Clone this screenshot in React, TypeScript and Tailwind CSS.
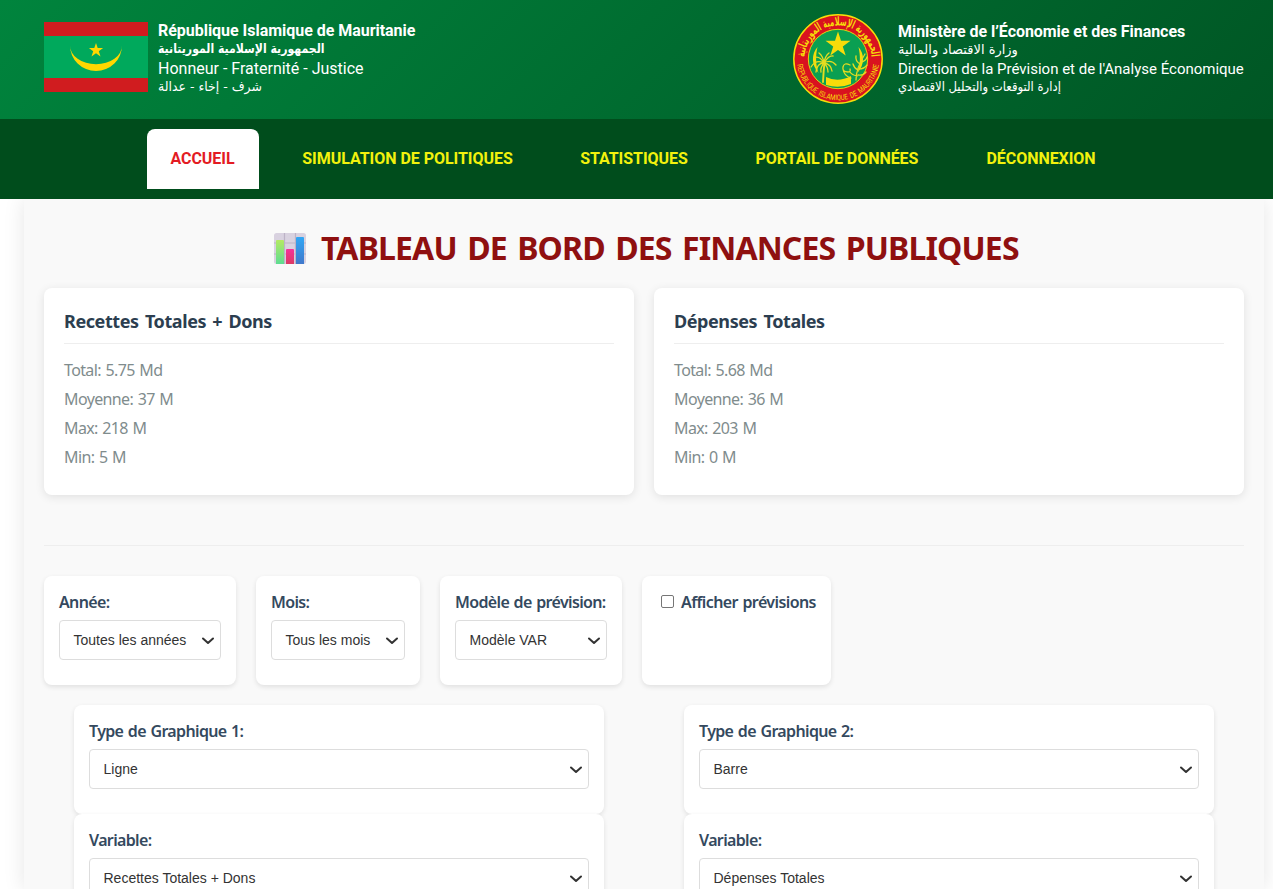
import React from "react";

const NAV = [
  { label: "ACCUEIL", width: "w-[112px]", active: true },
  { label: "SIMULATION DE POLITIQUES", width: "w-[258px]" },
  { label: "STATISTIQUES", width: "w-[155px]" },
  { label: "PORTAIL DE DONNÉES", width: "w-[211px]" },
  { label: "DÉCONNEXION", width: "w-[157px]" },
];

function Flag() {
  return (
    <svg className="h-[70px] w-[104px] shrink-0" viewBox="0 0 104 70">
      <rect width="104" height="70" fill="#d01c1f" />
      <rect y="14" width="104" height="42" fill="#00a95c" />
      <path d="M26 23.500a26 25.500 0 0 0 52 0a26 18.800 0 0 1-52 0z" fill="#ffd700" />
      <path d="M52 21l1.700 5h5.400l-4.300 3.200 1.700 5.200-4.500-3.200-4.500 3.200 1.700-5.200-4.300-3.200h5.400z" fill="#ffd700" />
    </svg>
  );
}

function Emblem() {
  return (
    <svg className="h-[90px] w-[90px] shrink-0" viewBox="0 0 90 90">
      <defs>
        <path id="arcTop" d="M11.500 42.500a33.600 33.600 0 0 1 67 0" />
        <path id="arcBottom" d="M3.800 45a41.200 41.200 0 0 0 82.400 0" />
      </defs>
      <circle cx="45" cy="45" r="44.2" fill="#d9121f" stroke="#f7dc0a" strokeWidth="1.5" />
      <circle cx="45" cy="45" r="29.7" fill="#0a9f52" stroke="#f7dc0a" strokeWidth="0.9" />
      <text fill="#f7dc0a" fontSize="12" fontFamily="DejaVu Sans" fontWeight="bold" textAnchor="middle" direction="rtl" textLength="101" lengthAdjust="spacingAndGlyphs">
        <textPath href="#arcTop" startOffset="50%">الجمهورية الإسلامية الموريتانية</textPath>
      </text>
      <text fill="#f7dc0a" fontSize="7.800" fontFamily="Roboto" textLength="118" lengthAdjust="spacingAndGlyphs" wordSpacing="1.500">
        <textPath href="#arcBottom" startOffset="5.500" textLength="118" lengthAdjust="spacingAndGlyphs">REPUBLIQUE ISLAMIQUE DE MAURITANIE</textPath>
      </text>
      <path d="M24.500 33c-6 7-6.500 17 1 26c-3-9-3-17-1-26zM65.500 33c6 7 6.500 17-1 26c3-9 3-17 1-26z" fill="#f7dc0a" />
      <path d="M45 17.500l3 9.200h9.500l-7.700 5.700 2.900 9.100-7.700-5.600-7.700 5.600 2.900-9.100-7.700-5.700h9.500z" fill="#f7dc0a" />
      <path d="M33 63q12 6 25-1v8q-12 5-25 1z" fill="#f7dc0a" />
      <g fill="none" stroke="#e5dc20" strokeWidth="1.300" strokeLinecap="round">
        <path d="M31.500 48q-1 10-1.500 20" strokeWidth="1.900" />
        <path d="M31 49q-5-8-10-5M31 49q-8-4-13 4M31 49q-7 0-8 9M31 49q5-8 9-7M31 49q7-4 12 2M31 49q7 1 8 8M31 49q-1-7-5-10M31 49q1-7 5-10M31 49q-4 5-3 9M31 49q4 4 4 9" />
        <path d="M57 51q-6-3-7 2t5 5q3 0 2-3M50 55q1 7 8 9M63 66q0-12 9-26M65 56q-4-2-5-6M67 50q-5-3-4-8M66 55q5 0 8-4M68 48q5-1 6-5M65 61q5 1 8-3M64 62q-5-1-7-4" />
      </g>
    </svg>
  );
}

function ChartIcon() {
  return (
    <svg className="h-[31px] w-8 shrink-0" viewBox="0 0 32 31">
      <defs>
        <linearGradient id="green" x1="0" y1="0" x2="0" y2="1"><stop stopColor="#b4ea63" /><stop offset="1" stopColor="#5edc92" /></linearGradient>
        <linearGradient id="pink" x1="0" y1="0" x2="0" y2="1"><stop stopColor="#f7309b" /><stop offset="1" stopColor="#db3a63" /></linearGradient>
        <linearGradient id="blue" x1="0" y1="0" x2="0" y2="1"><stop stopColor="#32a7f5" /><stop offset="1" stopColor="#4078cb" /></linearGradient>
      </defs>
      <rect width="32" height="31" rx="2.500" fill="#d9d2e0" />
      <path d="M10.500 0v31M21.500 0v31M0 10h32M0 21h32" stroke="#bdb3c6" strokeWidth="1.200" />
      <path d="M2 31V8a1 1 0 0 1 1-1h6a1 1 0 0 1 1 1v23z" fill="url(#green)" />
      <path d="M12 31V17a1 1 0 0 1 1-1h6a1 1 0 0 1 1 1v14z" fill="url(#pink)" />
      <path d="M22 31V5a1 1 0 0 1 1-1h6a1 1 0 0 1 1 1v26z" fill="url(#blue)" />
    </svg>
  );
}

function StatCard({ title, lines }: { title: string; lines: string[] }) {
  return (
    <section className="h-[207px] flex-1 rounded-lg bg-white px-5 pt-5 shadow-[0_2px_10px_rgba(0,0,0,0.1)]">
      <h3 className="h-9 border-b border-[#eee] text-[18px] leading-[27px] font-bold tracking-[-0.42px] text-[#2c3e50] [word-spacing:2px]">{title}</h3>
      <div className="pt-3">
        {lines.map((line) => (
          <p key={line} className="h-[29px] text-[16px] leading-[29px] tracking-[-0.62px] text-[#7f8c8d] [word-spacing:1px]">{line}</p>
        ))}
      </div>
    </section>
  );
}

function Field({ label, value, width }: { label: string; value: string; width: string }) {
  return (
    <div className={`h-[109px] shrink-0 rounded-lg bg-white p-[15px] shadow-[0_2px_5px_rgba(0,0,0,0.1)] ${width}`}>
      <div className="h-[29px] text-[16px] leading-[22px] font-semibold tracking-[-0.65px] whitespace-nowrap text-[#34495e] [word-spacing:1px]">{label}</div>
      <div className="flex h-10 items-center justify-between rounded border border-[#ddd] bg-white pr-[5px] pl-[13.500px] font-['Liberation_Sans',sans-serif] text-[14px] text-[#333]">
        <span className="whitespace-nowrap">{value}</span>
        <svg className="mt-px h-[9px] w-[14px]" viewBox="0 0 14 9" fill="none" stroke="#333" strokeWidth="2" strokeLinecap="round" strokeLinejoin="round">
          <path d="M2 2.500l5 4.500 5-4.500" />
        </svg>
      </div>
    </div>
  );
}

export default function App() {
  return (
    <div className="h-[889px] overflow-hidden bg-white font-['Noto_Sans',sans-serif]">
      <header className="flex h-[119px] justify-between bg-[linear-gradient(135deg,#00843d,#005624)] pr-[29px] pl-11 font-['Roboto',sans-serif] text-[16px] text-white">
        <div className="flex pt-[22px]">
          <Flag />
          <div className="flex flex-col pl-[10px] whitespace-nowrap">
            <strong className="h-[18px] leading-[18px] font-bold tracking-[-0.03px]">République Islamique de Mauritanie</strong>
            <strong className="h-[19px] w-[198px] origin-left scale-x-[0.84] font-['DejaVu_Sans'] text-[13px] leading-[17px]">الجمهورية الإسلامية الموريتانية</strong>
            <span className="h-[19px] leading-[19px]">Honneur - Fraternité - Justice</span>
            <span className="h-[19px] w-[108px] origin-left scale-x-[0.96] font-['DejaVu_Sans'] text-[13px] leading-[17px]">شرف - إخاء - عدالة</span>
          </div>
        </div>
        <div className="flex pt-[14px]">
          <Emblem />
          <div className="flex w-[361px] flex-col pt-[9px] pl-[15px] whitespace-nowrap">
            <strong className="h-[18px] leading-[18px] font-bold tracking-[-0.05px]">Ministère de l’Économie et des Finances</strong>
            <span className="h-[19px] w-[120px] font-['DejaVu_Sans'] text-[13px] leading-[17px]">وزارة الاقتصاد والمالية</span>
            <span className="h-[18px] text-[15px] leading-[18px]">Direction de la Prévision et de l'Analyse Économique</span>
            <span className="h-[19px] w-[182px] origin-left scale-x-[0.895] font-['DejaVu_Sans'] text-[13px] leading-[17px]">إدارة التوقعات والتحليل الاقتصادي</span>
          </div>
        </div>
      </header>
      <nav className="flex h-20 gap-5 bg-[#004d1c] pt-[10px] pl-[147px] font-['Roboto',sans-serif] text-[16px] font-bold tracking-[-0.04px]">
        {NAV.map((item) => (
          <a
            key={item.label}
            className={`flex h-[60px] items-center justify-center pr-px whitespace-nowrap ${item.width} ${item.active ? "rounded-t-lg bg-white text-[#e31b23]" : "text-[#f2f20d]"}`}
          >
            {item.label}
          </a>
        ))}
      </nav>
      <main className="mr-[9px] ml-6 h-[691px] bg-[#f9f9f9] px-5 pt-[25px] shadow-[0_0_20px_rgba(0,0,0,0.1)] [clip-path:inset(0_-30px_0_-30px)]">
        <h1 className="flex h-[49px] items-center pl-[230px] text-[32px] font-bold whitespace-nowrap text-[#8f1010]">
          <ChartIcon />
          <span className="pb-[2px] pl-[15px] tracking-[-0.87px] [word-spacing:3px]">TABLEAU DE BORD DES FINANCES PUBLIQUES</span>
        </h1>
        <div className="mt-[15px] flex gap-5">
          <StatCard title="Recettes Totales + Dons" lines={["Total: 5.75 Md", "Moyenne: 37 M", "Max: 218 M", "Min: 5 M"]} />
          <StatCard title="Dépenses Totales" lines={["Total: 5.68 Md", "Moyenne: 36 M", "Max: 203 M", "Min: 0 M"]} />
        </div>
        <hr className="mt-[50px] border-[#eee]" />
        <div className="mt-[30px] flex gap-5">
          <Field label="Année:" value="Toutes les années" width="w-[192px]" />
          <Field label="Mois:" value="Tous les mois" width="w-[164px]" />
          <Field label="Modèle de prévision:" value="Modèle VAR" width="w-[182px]" />
          <div className="flex h-[109px] w-[189px] items-start rounded-lg bg-white pt-[15px] pl-[19px] shadow-[0_2px_5px_rgba(0,0,0,0.1)]">
            <span className="mt-1 h-[13px] w-[13px] shrink-0 rounded-[2px] border border-[#767676] bg-white" />
            <span className="pl-[7px] text-[16px] leading-[22px] font-semibold tracking-[-0.6px] whitespace-nowrap text-[#34495e] [word-spacing:1px]">Afficher prévisions</span>
          </div>
        </div>
        <div className="mt-5 flex gap-20 px-[30px]">
          <div>
            <Field label="Type de Graphique 1:" value="Ligne" width="w-[530px]" />
            <Field label="Variable:" value="Recettes Totales + Dons" width="w-[530px]" />
          </div>
          <div>
            <Field label="Type de Graphique 2:" value="Barre" width="w-[530px]" />
            <Field label="Variable:" value="Dépenses Totales" width="w-[530px]" />
          </div>
        </div>
      </main>
    </div>
  );
}
